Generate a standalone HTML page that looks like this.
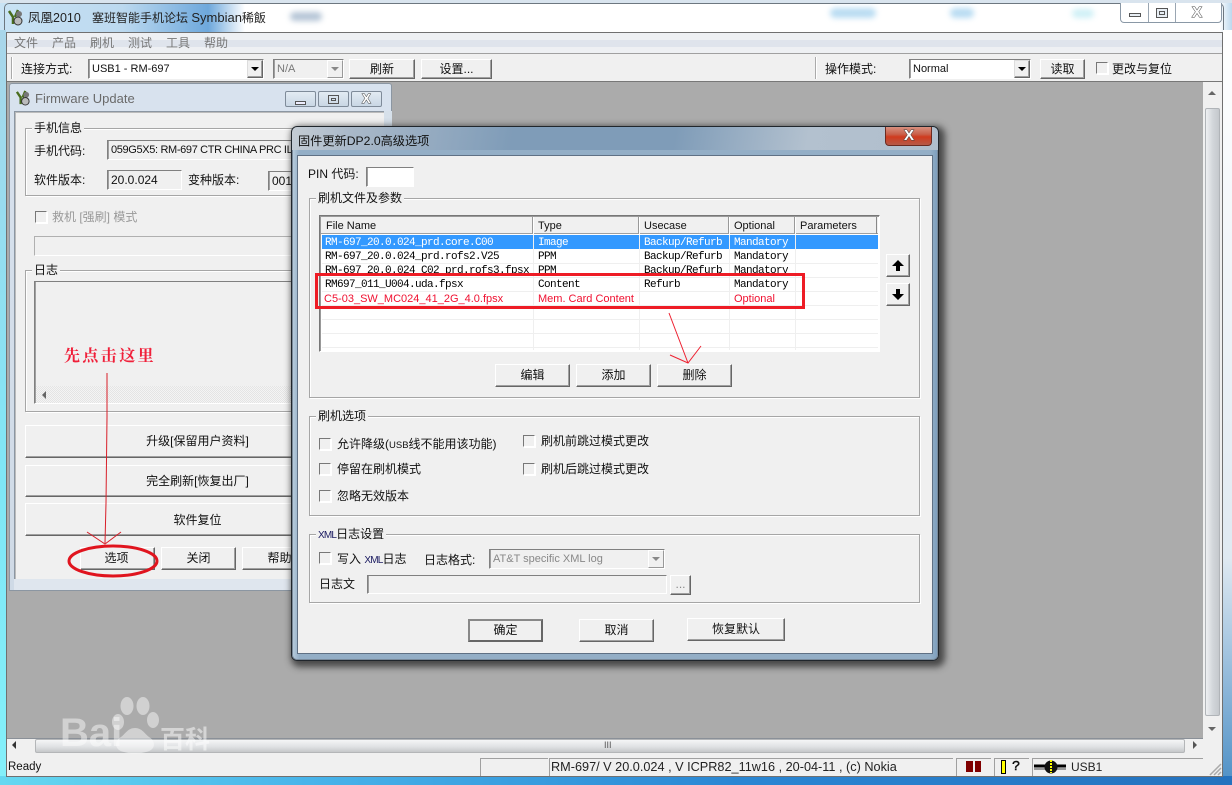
<!DOCTYPE html>
<html><head><meta charset="utf-8">
<style>
html,body{margin:0;padding:0;background:#fff}
#r{position:relative;width:1232px;height:785px;overflow:hidden;font:12px/14px "Liberation Sans","WenQuanYi Zen Hei","Noto Sans CJK SC",sans-serif;color:#111;background:#fff}
#r div,#r span.t{position:absolute;box-sizing:border-box}
.t{position:absolute;white-space:nowrap;line-height:14px}
.b{background:#f0f0f0;border:1px solid;border-color:#fff #666 #666 #fff;box-shadow:inset -1px -1px #a0a0a0;text-align:center;line-height:19px;white-space:nowrap}
.s{background:#f0f0f0;border:1px solid;border-color:#808080 #fff #fff #808080;box-shadow:inset 1px 0 #a0a0a0;white-space:nowrap;overflow:hidden;line-height:18px;padding-left:3px;font-size:11px}
.g{border:1px solid #a6a6a6;box-shadow:1px 1px #fff,inset 1px 1px #fff}
.l{position:absolute;top:-8px;left:6px;background:#f0f0f0;padding:0 2px;line-height:14px;white-space:nowrap}
.c{width:12px;height:12px;background:#f0f0f0;border:1px solid;border-color:#777 #fff #fff #777;box-shadow:1px 1px #fff}
.a{width:16px;background:#f0f0f0;border:1px solid;border-color:#ddd #666 #666 #ddd;box-shadow:inset -1px -1px #a0a0a0;top:0;bottom:0;right:0}
.a:after{content:"";position:absolute;left:3px;top:6px;border:4px solid transparent;border-top:4px solid #000;border-bottom:0}
.d{border-color:#fff #999 #999 #fff;box-shadow:none}
.d:after{border-top-color:#888}
.m{font:11px/14px "Liberation Mono",monospace;letter-spacing:-.6px;color:#000}
.gr{color:#777}
.cap{background:linear-gradient(#e3ebf3,#c9d7e5);border:1px solid #7f8b99;border-radius:2px}
.x{color:#fff;font-weight:bold;font-family:"Liberation Sans",sans-serif;-webkit-text-stroke:1px #444;paint-order:stroke fill}
.n{font-size:10px;letter-spacing:-.8px;color:#1a1a60}
</style></head><body><div id="r">

<!-- desktop / aero frame -->
<div style="left:0;top:0;width:1232px;height:785px;background:linear-gradient(90deg,#2f7fc4 0,#3d8ccb 1%,#fff 1.4%,#fff 99%,#bcd8ee 100%)"></div>
<div style="left:0;top:0;width:245px;height:32px;background:linear-gradient(90deg,#c9e3f5 0,#bcd9ef 50%,#6ea8dc 85%,#fff 100%)"></div>
<div style="left:0;top:0;width:1232px;height:3px;background:#d9e4ee"></div>
<div style="left:4px;top:3px;width:1220px;height:30px;border:1px solid #6d7780;border-bottom:0;border-radius:5px 5px 0 0"></div>
<div style="left:0;top:30px;width:6px;height:750px;background:linear-gradient(#a9d6ea,#7fe6f6 60%,#84f0fa)"></div>
<div style="left:1223px;top:30px;width:9px;height:755px;background:linear-gradient(#fff,#dfe9f1 70%,#4e90c6)"></div>
<div style="left:0;top:776px;width:1232px;height:9px;background:linear-gradient(90deg,#66d8f0,#48b4ea 25%,#2a86d3 60%,#2472be)"></div>
<div style="left:830px;top:8px;width:46px;height:10px;background:#b9dcf2;border-radius:5px;filter:blur(3px)"></div>
<div style="left:950px;top:8px;width:24px;height:10px;background:#b9dcf2;border-radius:5px;filter:blur(3px)"></div>
<div style="left:1072px;top:9px;width:22px;height:9px;background:#cff0f6;border-radius:5px;filter:blur(3px)"></div>
<div style="left:290px;top:12px;width:32px;height:9px;background:#b5c5d6;border-radius:5px;filter:blur(3px)"></div>

<!-- caption -->
<svg style="position:absolute;left:7px;top:9px" width="17" height="17" viewBox="0 0 17 17"><path d="M2 2l4 6v7M11 1L8 8" stroke="#4a6d1e" stroke-width="2.5" fill="none"/><circle cx="12" cy="5" r="3" fill="#777"/><circle cx="11" cy="12" r="4" fill="#bbb" stroke="#333"/></svg>
<span class="t" style="left:28px;top:11px;font-size:12.5px;color:#222">凤凰2010</span>
<span class="t" style="left:92px;top:11px;font-size:12px;color:#222">塞班智能手机论坛 <span style="font-size:13px">Symbian</span>稀飯</span>
<div style="left:1120px;top:3px;width:102px;height:20px;border:1px solid #8a98a6;border-top:0;border-radius:0 0 4px 4px;background:#fff"></div>
<div style="left:1148px;top:3px;width:1px;height:19px;background:#9aa6b2"></div>
<div style="left:1175px;top:3px;width:1px;height:19px;background:#9aa6b2"></div>
<div style="left:1129px;top:13px;width:12px;height:4px;border:1px solid #555;background:#e8eef4"></div>
<div style="left:1156px;top:8px;width:12px;height:10px;border:1px solid #555;background:#e8eef4"><div style="left:2px;top:2px;width:6px;height:4px;border:1px solid #555"></div></div>
<span class="t x" style="left:1192px;top:6px;font-size:15px">X</span>

<!-- app client -->
<div style="left:6px;top:32px;width:1217px;height:745px;background:#f0f0f0;border:1px solid #707070"></div>
<div style="left:7px;top:33px;width:1215px;height:20px;background:#eef0f3"></div>
<div style="left:7px;top:40px;width:1215px;height:7px;background:#dfe4ec"></div>
<div style="left:7px;top:53px;width:1215px;height:1px;background:#a0a0a0"></div>
<span class="t gr" style="left:14px;top:36px">文件</span>
<span class="t gr" style="left:52px;top:36px">产品</span>
<span class="t gr" style="left:90px;top:36px">刷机</span>
<span class="t gr" style="left:128px;top:36px">测试</span>
<span class="t gr" style="left:166px;top:36px">工具</span>
<span class="t gr" style="left:204px;top:36px">帮助</span>

<!-- toolbar -->
<div style="left:11px;top:57px;width:2px;height:22px;border-left:1px solid #aaa;border-right:1px solid #fff"></div>
<span class="t" style="left:21px;top:62px">连接方式:</span>
<div class="s" style="left:88px;top:59px;width:176px;height:20px;background:#fff;color:#111">USB1 - RM-697<div class="a"></div></div>
<div class="s" style="left:273px;top:59px;width:71px;height:20px;color:#777">N/A<div class="a d"></div></div>
<div class="b" style="left:349px;top:59px;width:66px;height:20px">刷新</div>
<div class="b" style="left:421px;top:59px;width:71px;height:20px">设置...</div>
<div style="left:815px;top:57px;width:2px;height:22px;border-left:1px solid #aaa;border-right:1px solid #fff"></div>
<span class="t" style="left:825px;top:62px">操作模式:</span>
<div class="s" style="left:909px;top:59px;width:122px;height:20px;background:#fff">Normal<div class="a"></div></div>
<div class="b" style="left:1040px;top:59px;width:45px;height:20px">读取</div>
<div class="c" style="left:1096px;top:62px"></div>
<span class="t" style="left:1112px;top:62px">更改与复位</span>
<div style="left:7px;top:81px;width:1215px;height:1px;background:#777"></div>

<!-- MDI area -->
<div style="left:7px;top:82px;width:1196px;height:656px;background:#ababab"></div>

<!-- vertical scrollbar -->
<div style="left:1203px;top:82px;width:19px;height:656px;background:#f0f0f0"></div>
<div style="left:1205px;top:108px;width:15px;height:608px;background:linear-gradient(90deg,#eef0f2,#d3d7db 50%,#c4c8cc);border:1px solid #b0b4b8;border-radius:2px"></div>
<div style="left:1208px;top:91px;border:4px solid transparent;border-bottom:4px solid #666;border-top:0"></div>
<div style="left:1208px;top:727px;border:4px solid transparent;border-top:4px solid #666;border-bottom:0"></div>
<!-- horizontal scrollbar -->
<div style="left:7px;top:738px;width:1196px;height:16px;background:#f0f0f0;border-top:1px solid #8a9098"></div>
<div style="left:35px;top:739px;width:1150px;height:14px;background:linear-gradient(#f4f5f6,#e0e2e4 55%,#c6c8ca);border:1px solid #b4b6b8;border-radius:2px"></div>
<div style="left:12px;top:741px;border:4px solid transparent;border-right:4px solid #333;border-left:0"></div>
<div style="left:1193px;top:741px;border:4px solid transparent;border-left:4px solid #555;border-right:0"></div>
<span class="t" style="left:604px;top:738px;font-size:9px;color:#555">III</span>

<!-- status bar -->
<div style="left:7px;top:754px;width:1215px;height:22px;background:#f0f0f0"></div>
<span class="t" style="left:8px;top:760px;font-size:11.5px">Ready</span>
<div style="left:480px;top:758px;width:68px;height:18px;border:1px solid #a0a0a0;border-width:1px 0 0 1px"></div>
<div style="left:549px;top:758px;width:404px;height:18px;border:1px solid #a0a0a0;border-width:1px 0 0 1px"></div>
<div style="left:956px;top:758px;width:35px;height:18px;border:1px solid #a0a0a0;border-width:1px 0 0 1px"></div>
<div style="left:994px;top:758px;width:35px;height:18px;border:1px solid #a0a0a0;border-width:1px 0 0 1px"></div>
<div style="left:1032px;top:758px;width:171px;height:18px;border:1px solid #a0a0a0;border-width:1px 0 0 1px"></div>
<span class="t" style="left:551px;top:760px;font-size:12.7px;color:#222">RM-697/ V 20.0.024 , V ICPR82_11w16 , 20-04-11 , (c) Nokia</span>
<div style="left:966px;top:761px;width:7px;height:11px;background:#800000"></div>
<div style="left:975px;top:761px;width:6px;height:11px;background:#800000"></div>
<div style="left:1001px;top:760px;width:5px;height:14px;background:#ff0;border:1px solid #000"></div>
<span class="t" style="left:1012px;top:760px;font:14px/14px 'Liberation Mono',monospace;-webkit-text-stroke:.4px #000">?</span>
<svg style="position:absolute;left:1034px;top:759px" width="33" height="16" viewBox="0 0 33 16"><path d="M0 7h32" stroke="#000" stroke-width="3"/><path d="M0 10h32" stroke="#999" stroke-width="2"/><circle cx="17" cy="8" r="6.5" fill="#111"/><path d="M17 1v13" stroke="#ff0" stroke-width="2" stroke-dasharray="2 1"/></svg>
<span class="t" style="left:1071px;top:760px;font-size:12px;color:#222">USB1</span>
<svg style="position:absolute;left:1209px;top:763px" width="13" height="13"><path d="M12 1L1 12M12 5L5 12M12 9L9 12" stroke="#aaa" stroke-width="1.5"/></svg>

<!-- Firmware Update window -->
<div style="left:9px;top:83px;width:383px;height:508px;background:linear-gradient(#d8e2ee,#cfdae6);border:1px solid #8b96a2;border-radius:3px 3px 0 0"></div>
<svg style="position:absolute;left:15px;top:90px" width="16" height="16" viewBox="0 0 17 17"><path d="M2 2l4 6v7M11 1L8 8" stroke="#4a6d1e" stroke-width="2.5" fill="none"/><circle cx="12" cy="5" r="3" fill="#777"/><circle cx="11" cy="12" r="4" fill="#bbb" stroke="#333"/></svg>
<span class="t" style="left:35px;top:92px;font-size:13px;color:#6a6a6a">Firmware Update</span>
<div class="cap" style="left:285px;top:91px;width:31px;height:16px"><div style="left:9px;top:9px;width:11px;height:4px;border:1px solid #555;background:#eef"></div></div>
<div class="cap" style="left:318px;top:91px;width:31px;height:16px"><div style="left:9px;top:3px;width:11px;height:9px;border:1px solid #555"><div style="left:2px;top:2px;width:5px;height:3px;border:1px solid #555"></div></div></div>
<div class="cap" style="left:351px;top:91px;width:31px;height:16px"><span class="t x" style="left:10px;top:0;font-size:13px">X</span></div>
<div style="left:14px;top:111px;width:370px;height:470px;background:#f0f0f0;border:1px solid #8b96a2;border-width:1px 0 1px 1px;box-shadow:inset 1px 1px #bbb"></div>
<div style="left:14px;top:579px;width:377px;height:11px;background:#dfe6ee"></div>
<div style="left:384px;top:111px;width:8px;height:480px;background:#d6e0ea"></div>

<div class="g" style="left:25px;top:128px;width:320px;height:68px"><span class="l">手机信息</span></div>
<span class="t" style="left:34px;top:144px">手机代码:</span>
<div class="s" style="left:107px;top:140px;width:220px;height:20px;letter-spacing:-.35px">059G5X5: RM-697 CTR CHINA PRC IL</div>
<span class="t" style="left:34px;top:173px">软件版本:</span>
<div class="s" style="left:107px;top:170px;width:75px;height:20px;font-size:12px">20.0.024</div>
<span class="t" style="left:188px;top:173px">变种版本:</span>
<div class="s" style="left:268px;top:171px;width:50px;height:20px;font-size:12px">001</div>
<div class="c" style="left:35px;top:211px"></div>
<span class="t" style="left:52px;top:210px;color:#999">救机 [强刷] 模式</span>
<div class="s" style="left:34px;top:236px;width:280px;height:20px;border-color:#b0b0b0 #fff #fff #b0b0b0;box-shadow:none"></div>
<div class="g" style="left:25px;top:270px;width:320px;height:142px"><span class="l">日志</span></div>
<div class="s" style="left:34px;top:281px;width:280px;height:123px"></div>
<div style="left:36px;top:386px;width:270px;height:17px;background:repeating-conic-gradient(#f4f4f4 0 25%,#e4e4e4 0 50%) 0 0/2px 2px"></div>
<div style="left:42px;top:391px;border:4px solid transparent;border-right:4px solid #666;border-left:0"></div>

<div class="b" style="left:25px;top:425px;width:345px;height:33px;line-height:31px">升级[保留用户资料]</div>
<div class="b" style="left:25px;top:465px;width:345px;height:32px;line-height:30px">完全刷新[恢复出厂]</div>
<div class="b" style="left:25px;top:503px;width:345px;height:33px;line-height:33px">软件复位</div>
<div class="b" style="left:80px;top:547px;width:75px;height:23px;line-height:21px;text-indent:-2px">选项</div>
<div class="b" style="left:161px;top:547px;width:75px;height:23px;line-height:21px">关闭</div>
<div class="b" style="left:242px;top:547px;width:75px;height:23px;line-height:21px">帮助</div>

<!-- Dialog shadow -->
<div style="left:291px;top:126px;width:648px;height:535px;border-radius:6px;box-shadow:3px 3px 7px 3px rgba(40,40,40,.75)"></div>
<!-- Dialog -->
<div style="left:291px;top:126px;width:648px;height:535px;border:1px solid #20262c;border-radius:6px;background:linear-gradient(100deg,#c4ccd4 0,#aab9c9 8%,#7f9cb8 30%,#7f9cb8 52%,#b3c1cf 70%,#aebcca 100%)"></div>
<div style="left:292px;top:150px;width:646px;height:510px;border-radius:0 0 5px 5px;background:linear-gradient(90deg,#b6cadb,#93aec6 1%,#93aec6 99%,#7fa0be);border:1px solid #7a8a9a;border-top:0"></div>
<span class="t" style="left:298px;top:134px;font-size:12.2px;color:#111">固件更新DP2.0高级选项</span>
<div style="left:885px;top:127px;width:47px;height:19px;background:linear-gradient(#d8907f 0,#c9604a 40%,#d03b1e 55%,#b55a48 100%);border:1px solid #6b2a20;border-top:0;border-radius:0 0 4px 4px"></div>
<span class="t x" style="left:904px;top:129px;font-size:15px">X</span>
<div style="left:297px;top:155px;width:636px;height:499px;background:#f0f0f0;border:1px solid #5f7084"></div>

<span class="t" style="left:308px;top:167px">PIN 代码:</span>
<div class="s" style="left:366px;top:167px;width:48px;height:20px;background:#fff"></div>

<div class="g" style="left:309px;top:198px;width:611px;height:200px"><span class="l">刷机文件及参数</span></div>
<!-- list -->
<div style="left:319px;top:215px;width:561px;height:137px;background:#fff;border:1px solid;border-color:#777 #fff #fff #777;box-shadow:inset 1px 1px #999"></div>
<div style="left:321px;top:217px;width:557px;height:17px;background:#f0f0f0;border-bottom:1px solid #a0a0a0"></div>
<div style="left:321px;top:217px;width:556px;height:17px;border-right:1px solid #888"></div>
<div style="left:532px;top:217px;width:2px;height:17px;border-left:1px solid #999;border-right:1px solid #fff"></div>
<div style="left:638px;top:217px;width:2px;height:17px;border-left:1px solid #999;border-right:1px solid #fff"></div>
<div style="left:728px;top:217px;width:2px;height:17px;border-left:1px solid #999;border-right:1px solid #fff"></div>
<div style="left:794px;top:217px;width:2px;height:17px;border-left:1px solid #999;border-right:1px solid #fff"></div>
<span class="t" style="left:326px;top:219px;font-size:11px">File Name</span>
<span class="t" style="left:538px;top:219px;font-size:11px">Type</span>
<span class="t" style="left:644px;top:219px;font-size:11px">Usecase</span>
<span class="t" style="left:734px;top:219px;font-size:11px">Optional</span>
<span class="t" style="left:800px;top:219px;font-size:11px">Parameters</span>
<div style="left:322px;top:235px;width:556px;height:14px;background:#3399ff"></div>
<div style="left:322px;top:263px;width:556px;height:1px;background:#efefef"></div>
<div style="left:322px;top:277px;width:556px;height:1px;background:#efefef"></div>
<div style="left:322px;top:291px;width:556px;height:1px;background:#efefef"></div>
<div style="left:322px;top:305px;width:556px;height:1px;background:#efefef"></div>
<div style="left:322px;top:319px;width:556px;height:1px;background:#efefef"></div>
<div style="left:322px;top:333px;width:556px;height:1px;background:#efefef"></div>
<div style="left:322px;top:347px;width:556px;height:1px;background:#efefef"></div>
<div style="left:533px;top:235px;width:1px;height:115px;background:#efefef"></div>
<div style="left:639px;top:235px;width:1px;height:115px;background:#efefef"></div>
<div style="left:729px;top:235px;width:1px;height:115px;background:#efefef"></div>
<div style="left:795px;top:235px;width:1px;height:115px;background:#efefef"></div>
<!-- rows -->
<span class="t m" style="left:325px;top:236px;color:#fff">RM-697_20.0.024_prd.core.C00</span>
<span class="t m" style="left:538px;top:236px;color:#fff">Image</span>
<span class="t m" style="left:644px;top:236px;color:#fff">Backup/Refurb</span>
<span class="t m" style="left:734px;top:236px;color:#fff">Mandatory</span>
<span class="t m" style="left:325px;top:250px">RM-697_20.0.024_prd.rofs2.V25</span>
<span class="t m" style="left:538px;top:250px">PPM</span>
<span class="t m" style="left:644px;top:250px">Backup/Refurb</span>
<span class="t m" style="left:734px;top:250px">Mandatory</span>
<span class="t m" style="left:325px;top:264px;height:9px;overflow:hidden">RM-697_20.0.024_C02_prd.rofs3.fpsx</span>
<span class="t m" style="left:538px;top:264px;height:9px;overflow:hidden">PPM</span>
<span class="t m" style="left:644px;top:264px;height:9px;overflow:hidden">Backup/Refurb</span>
<span class="t m" style="left:734px;top:264px;height:9px;overflow:hidden">Mandatory</span>
<span class="t m" style="left:325px;top:278px">RM697_011_U004.uda.fpsx</span>
<span class="t m" style="left:538px;top:278px">Content</span>
<span class="t m" style="left:644px;top:278px">Refurb</span>
<span class="t m" style="left:734px;top:278px">Mandatory</span>
<span class="t" style="left:324px;top:292px;color:#f01030;font-size:11px">C5-03_SW_MC024_41_2G_4.0.fpsx</span>
<span class="t" style="left:538px;top:292px;color:#f01030;font-size:11px">Mem. Card Content</span>
<span class="t" style="left:734px;top:292px;color:#f01030;font-size:11px">Optional</span>

<div class="b" style="left:886px;top:254px;width:24px;height:23px"></div>
<div class="b" style="left:886px;top:283px;width:24px;height:23px"></div>
<svg style="position:absolute;left:886px;top:254px" width="24" height="52"><path d="M12 6l-6 6h4v5h4v-5h4zM12 46l-6-6h4v-5h4v5h4z" fill="#000"/></svg>

<div class="b" style="left:495px;top:364px;width:75px;height:23px;line-height:21px">编辑</div>
<div class="b" style="left:576px;top:364px;width:75px;height:23px;line-height:21px">添加</div>
<div class="b" style="left:657px;top:364px;width:75px;height:23px;line-height:21px">删除</div>

<div class="g" style="left:309px;top:416px;width:611px;height:100px"><span class="l">刷机选项</span></div>
<div class="c" style="left:319px;top:438px"></div>
<span class="t" style="left:337px;top:437px">允许降级(<span style="font-size:9.5px">USB</span>线不能用该功能)</span>
<div class="c" style="left:319px;top:463px"></div>
<span class="t" style="left:337px;top:462px">停留在刷机模式</span>
<div class="c" style="left:319px;top:490px"></div>
<span class="t" style="left:337px;top:489px">忽略无效版本</span>
<div class="c" style="left:523px;top:435px"></div>
<span class="t" style="left:541px;top:434px">刷机前跳过模式更改</span>
<div class="c" style="left:523px;top:463px"></div>
<span class="t" style="left:541px;top:462px">刷机后跳过模式更改</span>

<div class="g" style="left:309px;top:534px;width:611px;height:69px"><span class="l"><span class="n">XML</span>日志设置</span></div>
<div class="c" style="left:319px;top:552px"></div>
<span class="t" style="left:337px;top:552px">写入 <span class="n">XML</span>日志</span>
<span class="t" style="left:424px;top:553px">日志格式:</span>
<div class="s" style="left:489px;top:549px;width:176px;height:20px;color:#888">AT&amp;T specific XML log<div class="a d"></div></div>
<span class="t" style="left:319px;top:577px">日志文</span>
<div class="s" style="left:367px;top:575px;width:300px;height:19px"></div>
<div class="b" style="left:670px;top:575px;width:21px;height:20px;line-height:17px;color:#888">...</div>

<div class="b" style="left:468px;top:619px;width:75px;height:23px;line-height:19px;border:2px solid #666;border-top-color:#888;border-left-color:#888;box-shadow:none">确定</div>
<div class="b" style="left:579px;top:619px;width:75px;height:23px;line-height:21px">取消</div>
<div class="b" style="left:687px;top:618px;width:98px;height:23px;line-height:21px">恢复默认</div>

<!-- Annotations -->
<span class="t" style="left:64px;top:347px;font:bold 16px/16px 'Noto Serif CJK SC',serif;color:#f0203a;letter-spacing:2.4px">先点击这里</span>
<svg style="position:absolute;left:0;top:0" width="1232" height="785">
<rect x="316.5" y="274.5" width="487" height="33" fill="none" stroke="#ee1c25" stroke-width="3"/>
<path d="M669 313L688 363M670 355L688 363L701 346" fill="none" stroke="#ee2030" stroke-width="1"/>
<path d="M107 373V417L106 503L105 543M87 532L105 544L121 532" fill="none" stroke="#d81e28" stroke-width="1"/>
<ellipse cx="113" cy="561" rx="44" ry="15" fill="none" stroke="#e0141e" stroke-width="3"/>
<g fill="#fff" opacity=".45">
<ellipse cx="127" cy="706" rx="6.5" ry="9"/><ellipse cx="143" cy="706" rx="6.5" ry="9"/>
<ellipse cx="118" cy="722" rx="6" ry="8"/><ellipse cx="153" cy="720" rx="6" ry="8"/>
<path d="M124 752c-10-2-10-11-3-15c4-3 7-9 14-9c7 0 10 6 14 9c7 4 7 13-3 15c-7 2-15 2-22 0z"/>
</g>
</svg>
<span class="t" style="left:60px;top:713px;font:bold 40px/40px 'Liberation Sans',sans-serif;color:#fff;opacity:.45">Bai</span>
<span class="t" style="left:160px;top:724px;font:bold 25px/28px 'WenQuanYi Zen Hei','Noto Sans CJK SC',sans-serif;color:#fff;opacity:.5">百科</span>

</div></body></html>
